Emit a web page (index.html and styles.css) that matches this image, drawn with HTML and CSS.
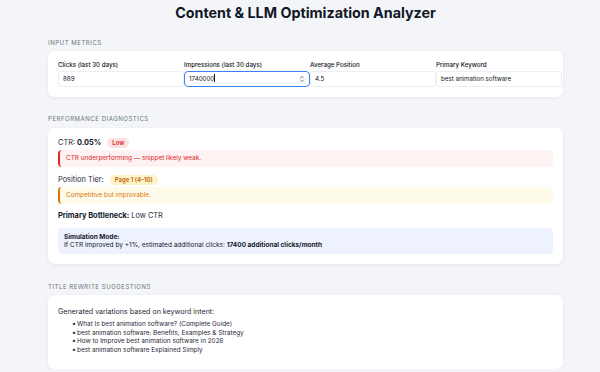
FILE: index.html
```html
<!DOCTYPE html>
<html>
<head>
<meta charset="utf-8">
<link rel="stylesheet" href="styles.css">
</head>
<body>
<h1 class="title">Content &amp; LLM Optimization Analyzer</h1>
<main class="container">
  <h2 class="section-label">Input Metrics</h2>
  <section class="card inputs-card">
    <div class="field">
      <label class="field-label">Clicks (last 30 days)</label>
      <div class="input">889</div>
    </div>
    <div class="field">
      <label class="field-label">Impressions (last 30 days)</label>
      <div class="input input-focus"><span>1740000<span class="caret"></span></span>
        <svg class="spinner" width="6" height="8" viewBox="0 0 6 8"><path d="M1.2 3.2 L3 1.4 L4.8 3.2" fill="none" stroke="#6b7280" stroke-width="0.9"/><path d="M1.2 4.8 L3 6.6 L4.8 4.8" fill="none" stroke="#6b7280" stroke-width="0.9"/></svg>
      </div>
    </div>
    <div class="field">
      <label class="field-label">Average Position</label>
      <div class="input">4.5</div>
    </div>
    <div class="field">
      <label class="field-label">Primary Keyword</label>
      <div class="input">best animation software</div>
    </div>
  </section>

  <h2 class="section-label gap-top">Performance Diagnostics</h2>
  <section class="card diag-card">
    <div class="row">CTR: <strong>0.05%</strong> <span class="badge badge-red">Low</span></div>
    <div class="alert alert-red">CTR underperforming — snippet likely weak.</div>
    <div class="row row-space">Position Tier: <span class="badge badge-yellow">Page 1 (4–10)</span></div>
    <div class="alert alert-yellow">Competitive but improvable.</div>
    <div class="row row-space2"><strong>Primary Bottleneck:</strong> Low CTR</div>
    <div class="sim">
      <strong>Simulation Mode:</strong><br>
      If CTR improved by +1%, estimated additional clicks: <strong>17400 additional clicks/month</strong>
    </div>
  </section>

  <h2 class="section-label gap-top2">Title Rewrite Suggestions</h2>
  <section class="card titles-card">
    <p class="intro">Generated variations based on keyword intent:</p>
    <ul class="list">
      <li>What Is best animation software? (Complete Guide)</li>
      <li>best animation software: Benefits, Examples &amp; Strategy</li>
      <li>How to Improve best animation software in 2026</li>
      <li>best animation software Explained Simply</li>
    </ul>
  </section>
</main>
</body>
</html>
```

FILE: styles.css
```css
* { box-sizing: border-box; }
body {
  margin: 0;
  background: #f3f5f9;
  font-family: Inter, "Noto Sans", "Liberation Sans", sans-serif;
  color: #1f2937;
}
.title {
  margin: 0;
  padding-top: 4px;
  height: 39px;
  text-align: center;
  font-size: 14.3px;
  line-height: 18px;
  font-weight: 700;
  color: #111827;
  padding-left: 11px;
}
.container {
  width: 515px;
  margin-left: 48px;
}
.section-label {
  margin: 0 0 4px 0;
  font-size: 6px;
  line-height: 8px;
  font-weight: 400;
  letter-spacing: 0.55px;
  text-transform: uppercase;
  color: #6b7280;
}
.gap-top { margin-top: 18px; margin-bottom: 5px; }
.gap-top2 { margin-top: 19px; }
.card {
  background: #fff;
  border-radius: 7px;
  box-shadow: 0 1px 4px rgba(15, 23, 42, 0.06);
  padding: 10px;
}
.inputs-card {
  display: grid;
  grid-template-columns: repeat(4, 126px);
  padding-right: 0;
}
.field-label {
  display: block;
  font-size: 6.2px;
  line-height: 8px;
  font-weight: 500;
  color: #111827;
  margin-bottom: 2px;
}
.input {
  height: 16px;
  border: 1px solid #eceef2;
  border-radius: 3px;
  font-size: 6.2px;
  line-height: 14px;
  padding: 0 4px;
  color: #111827;
  display: flex;
  align-items: center;
  justify-content: space-between;
}
.input-focus {
  border: 1.5px solid #3b82f6;
  border-radius: 4px;
}
.caret {
  display: inline-block;
  width: 0.7px;
  height: 8px;
  background: #111827;
  vertical-align: -1px;
}
.diag-card .row {
  font-size: 7.4px;
  line-height: 10px;
  color: #1f2937;
  display: flex;
  align-items: center;
  gap: 2px;
}
.diag-card strong { font-weight: 700; color: #111827; }
.row-space { margin-top: 8px; }
.row-space2 { margin-top: 7px; }
.badge {
  display: inline-block;
  font-size: 6px;
  line-height: 10px;
  font-weight: 600;
  padding: 0 5px;
  border-radius: 6px;
  margin-left: 4px;
}
.badge-red { background: #fee2e2; color: #dc2626; }
.badge-yellow { background: #fef3c7; color: #c2620a; }
.alert {
  margin-top: 2px;
  height: 17px;
  border-radius: 4px;
  border-left: 2px solid;
  padding-left: 6px;
  font-size: 6.4px;
  line-height: 17px;
}
.alert-red { background: #fef2f2; border-color: #dc2626; color: #dc2626; }
.alert-yellow { background: #fffbeb; border-color: #d97706; color: #d97706; }
.sim {
  margin-top: 7px;
  background: #eef2ff;
  border-radius: 4px;
  padding: 5px 6px;
  font-size: 6.5px;
  line-height: 8px;
  color: #111827;
}
.titles-card { padding: 11px 10px 15px; }
.intro {
  margin: 0;
  font-size: 7.1px;
  line-height: 11px;
  color: #1f2937;
}
.list {
  margin: 3px 0 0 0;
  padding-left: 19px;
  list-style: none;
  font-size: 6.4px;
  line-height: 7.6px;
  color: #1f2937;
}
.list li::before {
  content: "•";
  display: inline-block;
  width: 5px;
  margin-left: -5px;
  font-size: 7px;
}
```
